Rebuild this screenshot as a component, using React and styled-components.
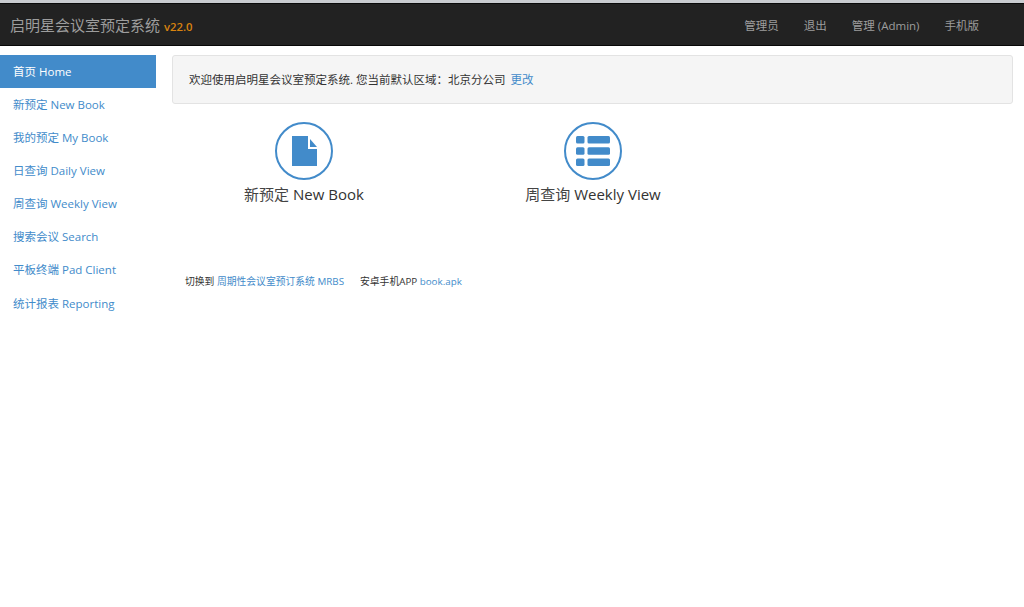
import React from "react";
import styled, { createGlobalStyle } from "styled-components";

const GlobalStyle = createGlobalStyle`
  html, body {
    margin: 0;
    padding: 0;
    background: #fff;
    font-family: "Open Sans", "Noto Sans CJK SC", sans-serif;
    font-size: 11.5px;
    color: #333;
  }
`;

const Page = styled.div`
  min-height: 607px;
  overflow: hidden;
`;

const Navbar = styled.header`
  height: 43px;
  margin-top: 3px;
  background: #222;
  border-top: 1px solid #0a0a0a;
  border-bottom: 1px solid #080808;
  box-sizing: border-box;
  display: flex;
  align-items: center;
  justify-content: space-between;
  padding: 0 45px 0 10px;
  position: relative;
  &::before {
    content: "";
    position: absolute;
    top: -4px;
    left: 0;
    right: 0;
    height: 3px;
    background: #c9ccd0;
  }
`;

const Brand = styled.div`
  font-size: 15px;
  color: #9d9d9d;
  display: flex;
  align-items: baseline;
  gap: 4px;
`;

const Version = styled.span`
  font-size: 11.3px;
  font-weight: 600;
  color: #d9830f;
`;

const NavLinks = styled.nav`
  display: flex;
  gap: 25px;
`;

const NavLink = styled.a`
  color: #9d9d9d;
`;

const Body = styled.div`
  display: flex;
  padding-top: 9px;
`;

const Sidebar = styled.aside`
  width: 156px;
  flex: none;
  display: flex;
  flex-direction: column;
`;

const SideItem = styled.a`
  height: 33.15px;
  box-sizing: border-box;
  display: flex;
  align-items: center;
  padding: 0 0 2px 13px;
  color: ${(p) => (p.$active ? "#fff" : "#428bca")};
  background: ${(p) => (p.$active ? "#428bca" : "transparent")};
`;

const Main = styled.main`
  flex: 1;
  padding: 0 11px 0 16px;
`;

const Well = styled.div`
  height: 49px;
  box-sizing: border-box;
  background: #f5f5f5;
  border: 1px solid #e3e3e3;
  border-radius: 3px;
  padding: 0 0 2px 16px;
  display: flex;
  align-items: center;
  white-space: pre;
`;

const Link = styled.a`
  color: #428bca;
`;

const ChangeLink = styled(Link)`
  margin-left: 2px;
`;

const Shortcuts = styled.div`
  display: flex;
  gap: 25px;
  margin-top: 18px;
`;

const Shortcut = styled.div`
  width: 264px;
  display: flex;
  flex-direction: column;
  align-items: center;
  color: #444;
  font-size: 15px;
`;

const Circle = styled.div`
  width: 58px;
  height: 58px;
  box-sizing: border-box;
  border: 2.75px solid #428bca;
  border-radius: 50%;
  display: flex;
  align-items: center;
  justify-content: center;
  margin-bottom: 3px;
`;

const Latin = styled.span`
  font-weight: 500;
  color: #333;
`;

const Footer = styled.div`
  margin-top: 70px;
  padding-left: 13px;
  display: flex;
  gap: 16px;
  font-size: 9.8px;
  color: #333;
`;

const FileIcon = () => (
  <svg width="25" height="30" viewBox="0 0 25 30">
    <path fill="#428bca" d="M0 0h16v13h9v17H0z" />
    <path fill="#428bca" d="M18 3l7 8h-7z" />
  </svg>
);

const ListIcon = () => (
  <svg width="34" height="30" viewBox="0 0 34 30">
    {[0, 11.25, 22.5].map((y) => (
      <g key={y} fill="#428bca">
        <rect x="0" y={y} width="8.500" height="7.500" rx="1.500" />
        <rect x="11.500" y={y} width="22.500" height="7.500" rx="1.500" />
      </g>
    ))}
  </svg>
);

const menu = [
  "新预定 New Book",
  "我的预定 My Book",
  "日查询 Daily View",
  "周查询 Weekly View",
  "搜索会议 Search",
  "平板终端 Pad Client",
  "统计报表 Reporting",
];

export default function App() {
  return (
    <Page>
      <GlobalStyle />
      <Navbar>
        <Brand>
          启明星会议室预定系统 <Version>v22.0</Version>
        </Brand>
        <NavLinks>
          <NavLink>管理员</NavLink>
          <NavLink>退出</NavLink>
          <NavLink>管理 (Admin)</NavLink>
          <NavLink>手机版</NavLink>
        </NavLinks>
      </Navbar>
      <Body>
        <Sidebar>
          <SideItem $active>首页 Home</SideItem>
          {menu.map((m) => (
            <SideItem key={m}>{m}</SideItem>
          ))}
        </Sidebar>
        <Main>
          <Well>
            欢迎使用启明星会议室预定系统. 您当前默认区域：北京分公司 <ChangeLink>更改</ChangeLink>
          </Well>
          <Shortcuts>
            <Shortcut>
              <Circle>
                <FileIcon />
              </Circle>
              <span>
                新预定 <Latin>New Book</Latin>
              </span>
            </Shortcut>
            <Shortcut>
              <Circle>
                <ListIcon />
              </Circle>
              <span>
                周查询 <Latin>Weekly View</Latin>
              </span>
            </Shortcut>
          </Shortcuts>
          <Footer>
            <span>
              切换到 <Link>周期性会议室预订系统 MRBS</Link>
            </span>
            <span>
              安卓手机APP <Link>book.apk</Link>
            </span>
          </Footer>
        </Main>
      </Body>
    </Page>
  );
}
